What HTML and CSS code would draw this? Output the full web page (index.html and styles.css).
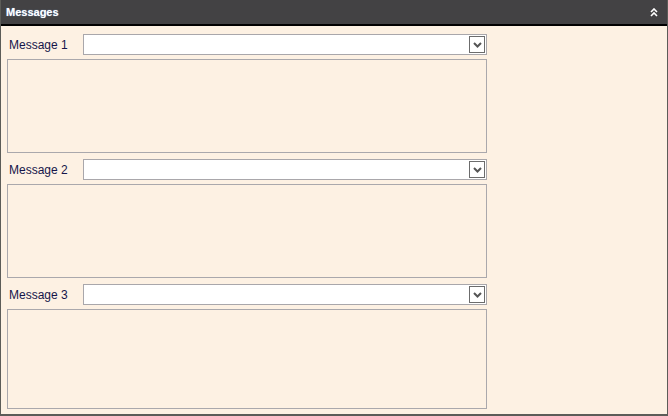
FILE: index.html
```html
<!DOCTYPE html>
<html lang="en">
  <head>
    <meta charset="UTF-8" />
    <title>Messages</title>
    <link rel="stylesheet" href="styles.css">
  </head>
  <body>
    <section class="panel">
      <header class="panel-head">
        <h1>Messages</h1>
        <svg class="collapse" width="8" height="9" viewBox="0 0 8 9">
          <path d="M1 4 L4 1 L7 4 M1 8 L4 5 L7 8" fill="none" stroke="#fff" stroke-width="1.6"/>
        </svg>
      </header>
      <main class="panel-body">
        <div class="msg">
          <div class="msg-row">
            <label>Message 1</label>
            <div class="select"><span class="drop"><svg width="9" height="6" viewBox="0 0 9 6"><path d="M1 1 L4.5 4.5 L8 1" fill="none" stroke="#555" stroke-width="2"/></svg></span></div>
          </div>
          <div class="text"></div>
        </div>
        <div class="msg">
          <div class="msg-row">
            <label>Message 2</label>
            <div class="select"><span class="drop"><svg width="9" height="6" viewBox="0 0 9 6"><path d="M1 1 L4.5 4.5 L8 1" fill="none" stroke="#555" stroke-width="2"/></svg></span></div>
          </div>
          <div class="text"></div>
        </div>
        <div class="msg last">
          <div class="msg-row">
            <label>Message 3</label>
            <div class="select"><span class="drop"><svg width="9" height="6" viewBox="0 0 9 6"><path d="M1 1 L4.5 4.5 L8 1" fill="none" stroke="#555" stroke-width="2"/></svg></span></div>
          </div>
          <div class="text"></div>
        </div>
      </main>
    </section>
  </body>
</html>
```

FILE: styles.css
```css
html, body {
  margin: 0;
  height: 100%;
}
body {
  font-family: "Liberation Sans", Arial, sans-serif;
}
.panel {
  box-sizing: border-box;
  height: 416px;
  display: flex;
  flex-direction: column;
  background: #fdf1e3;
  border: 1px solid #5c5c58;
  border-top: none;
  border-bottom-width: 2px;
}
.panel-head {
  height: 24px;
  background: #434244;
  border-bottom: 2px solid #000;
  display: flex;
  align-items: center;
  justify-content: space-between;
  padding: 0 9px 0 5px;
}
.panel-head h1 {
  margin: 0;
  font-size: 11px;
  font-weight: bold;
  color: #fff;
  text-shadow: 0 0 1px #8ab4e8;
}
.panel-body {
  flex: 1;
  display: flex;
  flex-direction: column;
  gap: 6px;
  padding: 8px 0 5px 6px;
  width: 480px;
}
.msg {
  display: flex;
  flex-direction: column;
  gap: 4px;
}
.msg.last {
  flex: 1;
}
.msg-row {
  display: flex;
  align-items: center;
  height: 21px;
}
.msg-row label {
  width: 76px;
  padding-left: 2px;
  box-sizing: border-box;
  font-size: 12px;
  color: #15154a;
}
.select {
  flex: 1;
  box-sizing: border-box;
  height: 21px;
  background: #fff;
  border: 1px solid #a9a7ab;
  display: flex;
  justify-content: flex-end;
  align-items: center;
  padding-right: 1px;
}
.drop {
  box-sizing: border-box;
  width: 16px;
  height: 17px;
  border: 1px solid #6c6c6c;
  display: flex;
  align-items: center;
  justify-content: center;
  background: #fff;
}
.text {
  box-sizing: border-box;
  height: 94px;
  border: 1px solid #aaa8ac;
}
.msg.last .text {
  flex: 1;
}
```
